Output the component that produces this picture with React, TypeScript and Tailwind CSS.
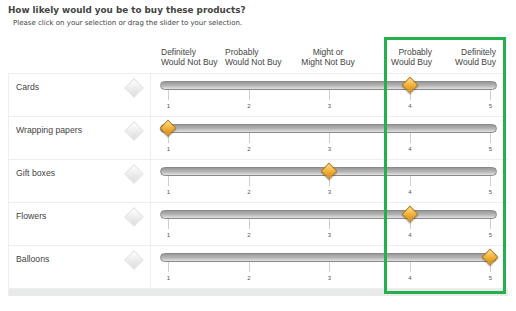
import React from 'react';

type Item = { name: string; value: number };

const ITEMS: Item[] = [
  { name: 'Cards', value: 4 },
  { name: 'Wrapping papers', value: 1 },
  { name: 'Gift boxes', value: 3 },
  { name: 'Flowers', value: 4 },
  { name: 'Balloons', value: 5 },
];

const SCALE = [1, 2, 3, 4, 5];

const Header: React.FC = () => (
  <div className="ml-[160px] mt-[19px] flex w-[337px] text-[8.5px] leading-[10px] text-[#444] font-['Liberation_Sans',Arial,sans-serif]">
    <div className="w-[65px] pl-px text-left">
      Definitely
      <br />
      Would Not Buy
    </div>
    <div className="w-[68px] text-left">
      Probably
      <br />
      Would Not Buy
    </div>
    <div className="w-[70px] text-center">
      Might or
      <br />
      Might Not Buy
    </div>
    <div className="w-[69px] text-right">
      Probably
      <br />
      Would Buy
    </div>
    <div className="w-[64px] text-right">
      Definitely
      <br />
      Would Buy
    </div>
  </div>
);

const Slider: React.FC<{ value: number }> = ({ value }) => {
  const pct = ((value - 1) / 4) * 100;
  return (
    <div className="pl-[9px] pt-[7px]">
      <div className="relative w-[337px]">
        <div className="h-[9px] rounded-full border border-[#8a8a8a] bg-gradient-to-b from-[#999] via-[#b4b4b4] to-[#e2e2e2]" />
        <div className="ml-[8px] mr-[6px] flex justify-between">
          {SCALE.map((n) => (
            <div key={n} className="flex w-px flex-col items-center">
              <div className="h-[10px] w-px bg-[#cfcfcf]" />
              <div className="mt-[3px] text-[6px] leading-[7px] text-[#555]">{n}</div>
            </div>
          ))}
        </div>
        <div className="absolute left-[8px] right-[7px] top-0 h-[9px]">
          <div
            className="absolute top-[4px] h-[12px] w-[12px] -translate-x-1/2 -translate-y-1/2 rotate-45 border border-[#b77c16] bg-gradient-to-br from-[#ffe08a] via-[#f3b33a] to-[#d48a0c] shadow-[1px_1px_1px_rgba(0,0,0,0.25)]"
            style={{ left: `${pct}%` }}
          />
        </div>
      </div>
    </div>
  );
};

const Row: React.FC<{ item: Item }> = ({ item }) => (
  <div className="flex h-[43px] border-b border-[#eee]">
    <div className="flex w-[142px] items-start justify-between border-r border-[#eee] pt-[6px]">
      <span className="pl-[7px] pt-[2px] text-[8.7px] leading-[10px] text-[#444]">{item.name}</span>
      <div className="mr-[9px] mt-[1px] h-[14px] w-[14px] rotate-45 border border-[#e2e2e2] bg-gradient-to-br from-white to-[#dcdcdc]" />
    </div>
    <div className="flex-1">
      <Slider value={item.value} />
    </div>
  </div>
);

export default function App() {
  return (
    <div className="relative h-[311px] w-[516px] overflow-hidden bg-white font-['Liberation_Sans',Arial,sans-serif]">
      <div className="pl-2 pt-[4px] font-['DejaVu_Sans',Verdana,sans-serif] text-[8.8px] font-bold leading-[12px] text-[#444]">
        How likely would you be to buy these products?
      </div>
      <div className="pl-[13px] pt-[3px] font-['DejaVu_Sans',Verdana,sans-serif] text-[7px] leading-[9px] text-[#444]">
        Please click on your selection or drag the slider to your selection.
      </div>
      <Header />
      <div className="ml-2 mt-[6px] w-[500px] border-l border-t border-[#eee]">
        {ITEMS.map((it) => (
          <Row key={it.name} item={it} />
        ))}
        <div className="h-[7px] bg-[#e8eaea]" />
      </div>
      <div className="pointer-events-none absolute left-[384px] top-[37px] h-[257px] w-[122px] border-[3px] border-[#22b14c]" />
    </div>
  );
}
